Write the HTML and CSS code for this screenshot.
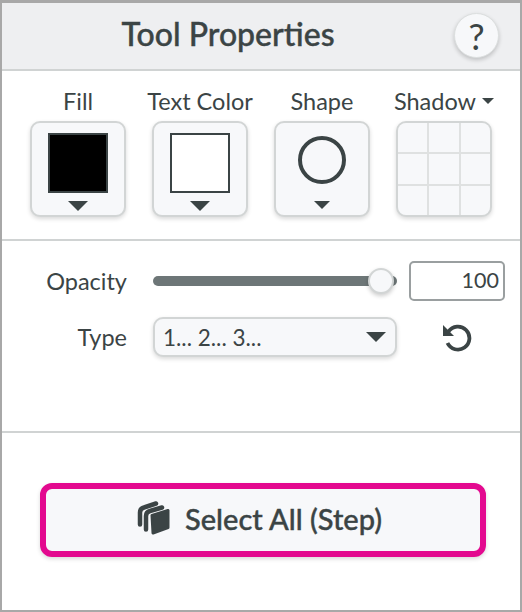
FILE: index.html
```html
<!DOCTYPE html>
<html lang="en">
<head>
    <meta charset="UTF-8">
    <title>Tool Properties</title>
    <link rel="stylesheet" href="styles.css">
</head>
<body>
    <div class="panel">
        <div class="header">
            <h1>Tool Properties</h1>
            <button class="help-btn">?</button>
        </div>

        <div class="swatches">
            <div class="swatch-col">
                <div class="swatch-label">Fill</div>
                <div class="swatch-btn">
                    <div class="color-box color-black"></div>
                    <div class="arrow"></div>
                </div>
            </div>
            <div class="swatch-col">
                <div class="swatch-label">Text Color</div>
                <div class="swatch-btn">
                    <div class="color-box color-white"></div>
                    <div class="arrow"></div>
                </div>
            </div>
            <div class="swatch-col">
                <div class="swatch-label">Shape</div>
                <div class="swatch-btn">
                    <div class="shape-circle"></div>
                    <div class="arrow arrow-small"></div>
                </div>
            </div>
            <div class="swatch-col">
                <div class="swatch-label">Shadow <span class="mini-arrow"></span></div>
                <div class="swatch-btn shadow-grid">
                    <span></span><span></span><span></span>
                    <span></span><span></span><span></span>
                    <span></span><span></span><span></span>
                </div>
            </div>
        </div>

        <div class="options">
            <div class="option-row">
                <label>Opacity</label>
                <div class="slider">
                    <div class="slider-thumb"></div>
                </div>
                <div class="number-box">100</div>
            </div>
            <div class="option-row type-row">
                <label>Type</label>
                <div class="select-box">
                    <span>1... 2... 3...</span>
                    <div class="arrow"></div>
                </div>
                <div class="reset-icon">
                    <svg width="30" height="30" viewBox="0 0 30 30">
                        <path d="M6.500 9.500A11.500 11.500 0 1 1 5.500 21" fill="none" stroke="#3b4445" stroke-width="3.800"/>
                        <path d="M1 3V14H12Z" fill="#3b4445"/>
                    </svg>
                </div>
            </div>
        </div>

        <div class="footer">
            <button class="select-all">
                <svg width="36" height="36" viewBox="0 2.500 36 36">
                    <path d="M20 5L8 9Q4 10 4 14V26" fill="none" stroke="#3b4445" stroke-width="4.500" stroke-linecap="round"/>
                    <path d="M26 9L14 12.500Q10 13.500 10 17.500V31" fill="none" stroke="#3b4445" stroke-width="4.500" stroke-linecap="round"/>
                    <path d="M16 17L32 12V29L17 34.500Z" fill="#3b4445" stroke="#3b4445" stroke-width="3" stroke-linejoin="round"/>
                </svg>
                Select All (Step)
            </button>
        </div>
    </div>
</body>
</html>
```

FILE: styles.css
```css
* {
    margin: 0;
    padding: 0;
    box-sizing: border-box;
}

body {
    font-family: 'Lato', 'Liberation Sans', sans-serif;
    background: #fff;
    color: #3b4445;
}

.panel {
    width: 522px;
    height: 612px;
    border: 2px solid #a8a8a8;
    border-top-width: 3px;
    display: flex;
    flex-direction: column;
}

.header {
    height: 68px;
    background: #eeeff1;
    border-bottom: 2px solid #d0d3d3;
    display: flex;
    align-items: center;
    padding-right: 21px;
}

.header h1 {
    flex: 1;
    text-align: center;
    font-size: 32px;
    font-weight: 500;
    -webkit-text-stroke: 0.4px #3b4445;
    padding-bottom: 6px;
}

.help-btn {
    width: 45px;
    height: 45px;
    border-radius: 50%;
    border: 1px solid #dcdfdf;
    background: #f7f8fa;
    box-shadow: 0 2px 4px rgba(0, 0, 0, 0.2);
    color: #3b4445;
    font-family: inherit;
    font-size: 36px;
    line-height: 1;
    margin-bottom: 1px;
}

.swatches {
    height: 170px;
    border-bottom: 2px solid #d0d3d3;
    display: flex;
    gap: 26px;
    padding: 15px 0 0 28px;
}

.swatch-col {
    width: 96px;
    display: flex;
    flex-direction: column;
    align-items: center;
}

.swatch-label {
    height: 35px;
    line-height: 30px;
    font-size: 23.500px;
    white-space: nowrap;
    display: flex;
    align-items: flex-start;
    gap: 6px;
}

.swatch-btn {
    width: 96px;
    height: 96px;
    border: 2px solid #d2d5d5;
    border-radius: 10px;
    background: #f7f8fa;
    box-shadow: 0 2px 4px rgba(0, 0, 0, 0.15);
    display: flex;
    flex-direction: column;
    align-items: center;
    overflow: hidden;
}

.arrow {
    width: 0;
    height: 0;
    border-left: 10px solid transparent;
    border-right: 10px solid transparent;
    border-top: 10px solid #3b4445;
}

.swatch-btn .arrow {
    margin-top: 8px;
}

.swatch-btn .arrow-small {
    margin-top: 17px;
    border-left-width: 8px;
    border-right-width: 8px;
    border-top-width: 8px;
}

.color-box {
    width: 60px;
    height: 60px;
    margin-top: 10px;
    border: 2px solid #3b4445;
}

.color-black {
    background: #000;
}

.color-white {
    background: #fff;
}

.shape-circle {
    width: 48px;
    height: 48px;
    margin-top: 13px;
    border: 4px solid #3b4445;
    border-radius: 50%;
}

.mini-arrow {
    width: 0;
    height: 0;
    margin-top: 12px;
    border-left: 6px solid transparent;
    border-right: 6px solid transparent;
    border-top: 6px solid #3b4445;
}

.shadow-grid {
    display: grid;
    grid-template-columns: 1fr 1fr 1fr;
    grid-template-rows: 1fr 1fr 1fr;
    gap: 2px;
    align-items: stretch;
    background: #dfe1e1;
}

.shadow-grid span {
    background: #f7f8fa;
}

.options {
    height: 192px;
    border-bottom: 2px solid #d0d3d3;
    padding-top: 20px;
}

.option-row {
    display: flex;
    align-items: center;
    height: 40px;
}

.option-row label {
    width: 125px;
    text-align: right;
    font-size: 23.500px;
}

.slider {
    position: relative;
    width: 244px;
    height: 10px;
    margin-left: 26px;
    background: #6d7677;
    border-radius: 5px;
}

.slider-thumb {
    position: absolute;
    left: 215px;
    top: -8px;
    width: 26px;
    height: 26px;
    border-radius: 50%;
    background: #f7f8fa;
    border: 2px solid #d2d5d5;
    box-shadow: 0 2px 4px rgba(0, 0, 0, 0.2);
}

.number-box {
    width: 96px;
    height: 40px;
    margin-left: 12px;
    border: 2px solid #9a9fa0;
    border-radius: 5px;
    text-align: right;
    line-height: 35px;
    padding-right: 4px;
    font-size: 21.500px;
}

.type-row {
    margin-top: 16px;
}

.select-box {
    width: 244px;
    height: 40px;
    margin-left: 26px;
    padding: 0 9px 0 8px;
    border: 2px solid #d2d5d5;
    border-radius: 10px;
    background: #f7f8fa;
    box-shadow: 0 2px 4px rgba(0, 0, 0, 0.15);
    display: flex;
    align-items: center;
    justify-content: space-between;
    font-size: 22.500px;
}

.reset-icon {
    width: 30px;
    height: 30px;
    margin-left: 45px;
}

.footer {
    flex: 1;
    padding: 50px 0 0 38px;
}

.select-all {
    width: 446px;
    height: 74px;
    padding: 0 8px 3px 0;
    border: 6px solid #e3098f;
    border-radius: 12px;
    background: #f7f8fa;
    box-shadow: 0 2px 4px rgba(0, 0, 0, 0.15);
    color: #3b4445;
    font-family: inherit;
    font-size: 29px;
    font-weight: 500;
    -webkit-text-stroke: 0.4px #3b4445;
    display: flex;
    align-items: center;
    justify-content: center;
    gap: 13px;
}
```
